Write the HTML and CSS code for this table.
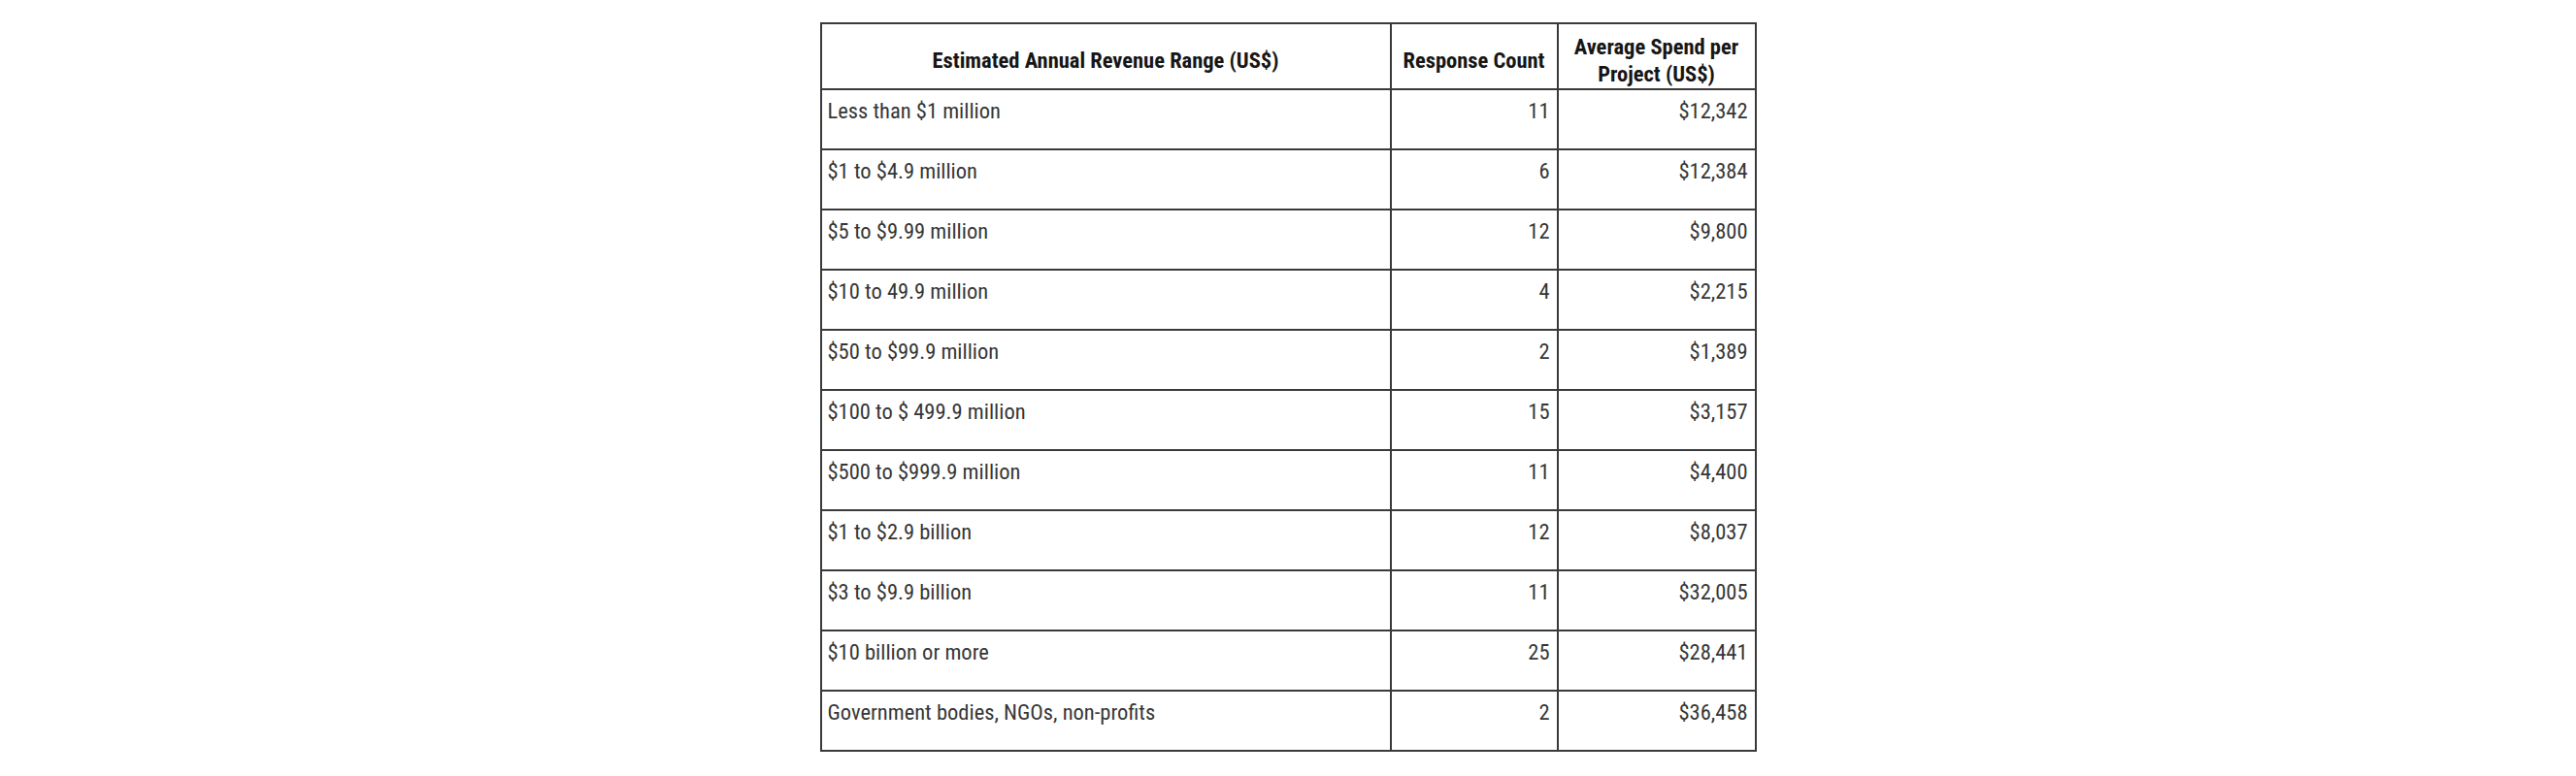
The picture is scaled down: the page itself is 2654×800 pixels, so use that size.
FILE: index.html
```html
<!DOCTYPE html>
<html lang="en">
<head>
<meta charset="utf-8">
<title>Estimated Annual Revenue Range</title>
<link rel="stylesheet" href="styles.css">
</head>
<body>
<table class="data">
  <colgroup>
    <col class="c-range">
    <col class="c-count">
    <col class="c-spend">
  </colgroup>
  <thead>
    <tr>
      <th><span class="t">Estimated Annual Revenue Range (US$)</span></th>
      <th><span class="t">Response Count</span></th>
      <th><span class="t">Average Spend per<br>Project (US$)</span></th>
    </tr>
  </thead>
  <tbody>
    <tr><td class="lbl"><span class="t">Less than $1 million</span></td><td class="num"><span class="t">11</span></td><td class="num"><span class="t">$12,342</span></td></tr>
    <tr><td class="lbl"><span class="t">$1 to $4.9 million</span></td><td class="num"><span class="t">6</span></td><td class="num"><span class="t">$12,384</span></td></tr>
    <tr><td class="lbl"><span class="t">$5 to $9.99 million</span></td><td class="num"><span class="t">12</span></td><td class="num"><span class="t">$9,800</span></td></tr>
    <tr><td class="lbl"><span class="t">$10 to 49.9 million</span></td><td class="num"><span class="t">4</span></td><td class="num"><span class="t">$2,215</span></td></tr>
    <tr><td class="lbl"><span class="t">$50 to $99.9 million</span></td><td class="num"><span class="t">2</span></td><td class="num"><span class="t">$1,389</span></td></tr>
    <tr><td class="lbl"><span class="t">$100 to $ 499.9 million</span></td><td class="num"><span class="t">15</span></td><td class="num"><span class="t">$3,157</span></td></tr>
    <tr><td class="lbl"><span class="t">$500 to $999.9 million</span></td><td class="num"><span class="t">11</span></td><td class="num"><span class="t">$4,400</span></td></tr>
    <tr><td class="lbl"><span class="t">$1 to $2.9 billion</span></td><td class="num"><span class="t">12</span></td><td class="num"><span class="t">$8,037</span></td></tr>
    <tr><td class="lbl"><span class="t">$3 to $9.9 billion</span></td><td class="num"><span class="t">11</span></td><td class="num"><span class="t">$32,005</span></td></tr>
    <tr><td class="lbl"><span class="t">$10 billion or more</span></td><td class="num"><span class="t">25</span></td><td class="num"><span class="t">$28,441</span></td></tr>
    <tr><td class="lbl"><span class="t">Government bodies, NGOs, non-profits</span></td><td class="num"><span class="t">2</span></td><td class="num"><span class="t">$36,458</span></td></tr>
  </tbody>
</table>
</body>
</html>
```
FILE: styles.css
```css
html, body {
  margin: 0;
  padding: 0;
  background: #ffffff;
}

body {
  padding-top: 23px;
  font-family: Roboto, "Liberation Sans", sans-serif;
  font-stretch: 87.5%;
}

.data {
  margin: 0 auto;
  width: 963px;
  table-layout: fixed;
  border-collapse: collapse;
  border: 2px solid #3a3a3a;
}

.c-range { width: 587px; }
.c-count { width: 172px; }
.c-spend { width: 204px; }

.data th,
.data td {
  border: 2px solid #3a3a3a;
}

.data th {
  height: 58px;
  padding: 8px 6px 0;
  vertical-align: middle;
  text-align: center;
  font-weight: 700;
  font-size: 22.5px;
  line-height: 28px;
  color: #161616;
}

.data td {
  height: 52px;
  padding: 8px 7px 0 6px;
  vertical-align: top;
  font-size: 22.5px;
  font-weight: 400;
  color: #363636;
}

.data td.num {
  text-align: right;
}

.t {
  display: inline-block;
}
```
